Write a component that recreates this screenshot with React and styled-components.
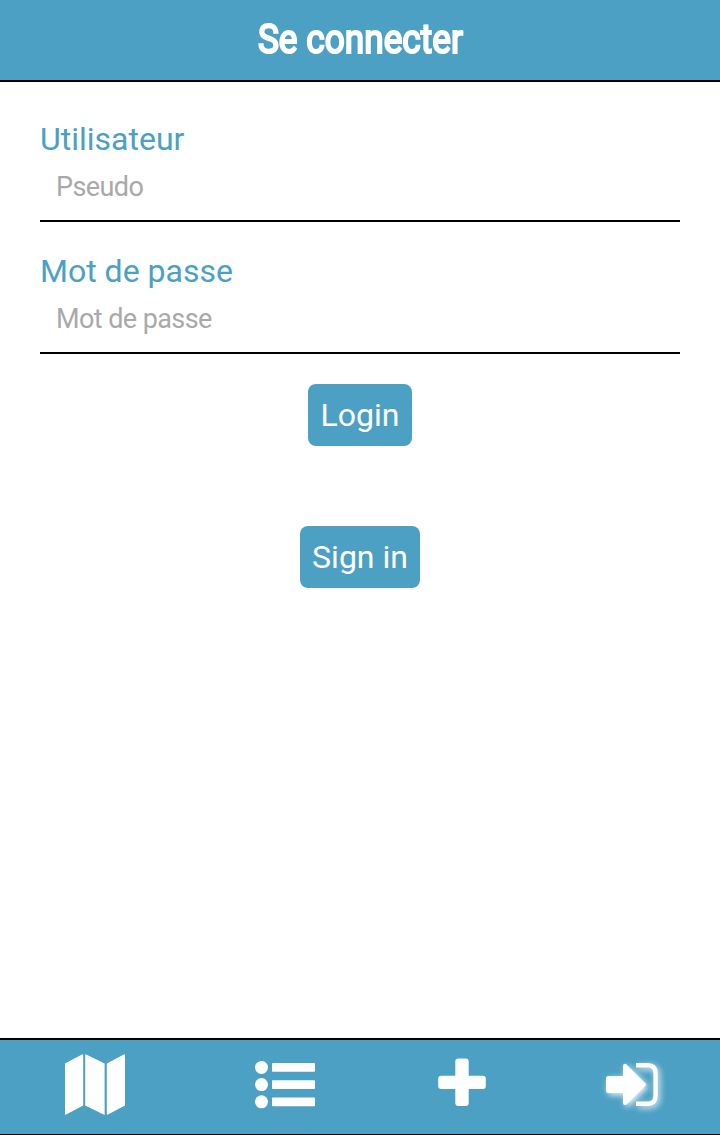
import React from 'react';
import styled, { createGlobalStyle } from 'styled-components';

const blue = '#4ca0c3';

const Global = createGlobalStyle`
  *{box-sizing:border-box}
  body{margin:0;background:#fff;font-family:Roboto,sans-serif}
`;
const Screen = styled.div`display:flex;flex-direction:column;height:1135px;width:720px;`;
const Header = styled.header`
  height:82px;background:${blue};border-bottom:2px solid #000;color:#fff;
  display:flex;align-items:center;justify-content:center;
`;
const Title = styled.h1`
  margin:0;font-size:40px;line-height:48px;font-weight:400;white-space:nowrap;
  -webkit-text-stroke:2.1px #fff;transform:scaleX(.88);
`;
const Form = styled.main`flex:1;padding:38px 40px 0;display:flex;flex-direction:column;align-items:center;`;
const Field = styled.label`
  display:flex;flex-direction:column;width:100%;height:102px;
  margin-bottom:30px;border-bottom:2px solid #000;
`;
const Label = styled.span`color:${blue};font-size:32px;line-height:38px;`;
const Input = styled.input`
  border:0;outline:0;background:none;padding:0 16px;height:58px;
  font:27px Roboto,sans-serif;letter-spacing:-.58px;
  &::placeholder{color:#a9a9a9;opacity:1}
`;
const Button = styled.button`
  border:0;border-radius:8px;background:${blue};color:#fff;font:32px Roboto,sans-serif;
  width:${p => p.$width}px;height:62px;padding:0;margin-bottom:80px;
`;
const Nav = styled.nav`
  height:97px;background:${blue};border-top:2px solid #000;border-bottom:1px solid #000;
  display:grid;grid-template-columns:190px 190px 164px 176px;color:#fff;
`;
const Item = styled.a`
  display:flex;justify-content:center;align-items:flex-start;color:inherit;padding-top:${p => p.$top}px;
  svg{display:block;overflow:visible;fill:currentColor;filter:${p => p.$active ? 'drop-shadow(2px 2px 3px rgba(255,255,255,.9))' : 'none'}}
`;

const MapIcon = () => (
  <svg width="60" height="61" viewBox="0 0 60 61">
    <path d="M0 9.5 17 .4Q18.2 0 18.2 1V51.5L1.2 60.6Q0 61.2 0 60z" />
    <path d="M20.2 1Q20.2 0 21.2.4L39.6 9.5V60.2Q39.6 61 38.6 60.6L20.2 51.5z" />
    <path d="M41.8 9.5 58.8.4Q60 0 60 1V51.5L43 60.6Q41.8 61.2 41.8 60z" />
  </svg>
);
const ListIcon = () => (
  <svg width="60" height="48" viewBox="0 0 60 48">
    {[7.4, 24.6, 41.8].map(y => (
      <g key={y}>
        <circle cx="6.5" cy={y} r="6.5" />
        <rect x="17" y={y - 4.4} width="43" height="8.8" rx=".8" />
      </g>
    ))}
  </svg>
);
const PlusIcon = () => (
  <svg width="48" height="48" viewBox="0 0 48 48">
    <rect x="17.3" y=".6" width="13.4" height="47.4" rx="3" />
    <rect x=".2" y="17.8" width="47.6" height="13.2" rx="3" />
  </svg>
);
const LoginIcon = () => (
  <svg width="52" height="44" viewBox="0 0 52 44">
    <path d="M2.5 13H17V3Q17 .8 19 .8Q20 .8 21 2L39.5 20.4Q40.6 21.6 39.5 22.8L21 41Q20 42.1 19 42.1Q17 42.1 17 40V30H2.5Q0 30 0 27.5V15.5Q0 13 2.5 13z" />
    <path d="M32.2 2.2H41.5Q49.6 2.2 49.6 10.3V32.7Q49.6 40.8 41.5 40.8H32.2" fill="none" stroke="currentColor" strokeWidth="4.4" strokeLinecap="square" />
  </svg>
);

export default function App() {
  return (
    <Screen>
      <Global />
      <Header><Title>Se connecter</Title></Header>
      <Form>
        <Field><Label>Utilisateur</Label><Input placeholder="Pseudo" /></Field>
        <Field><Label>Mot de passe</Label><Input placeholder="Mot de passe" /></Field>
        <Button $width={104}>Login</Button>
        <Button $width={120}>Sign in</Button>
      </Form>
      <Nav>
        <Item $top={14}><MapIcon /></Item>
        <Item $top={20}><ListIcon /></Item>
        <Item $top={18}><PlusIcon /></Item>
        <Item $top={23} $active><LoginIcon /></Item>
      </Nav>
    </Screen>
  );
}
